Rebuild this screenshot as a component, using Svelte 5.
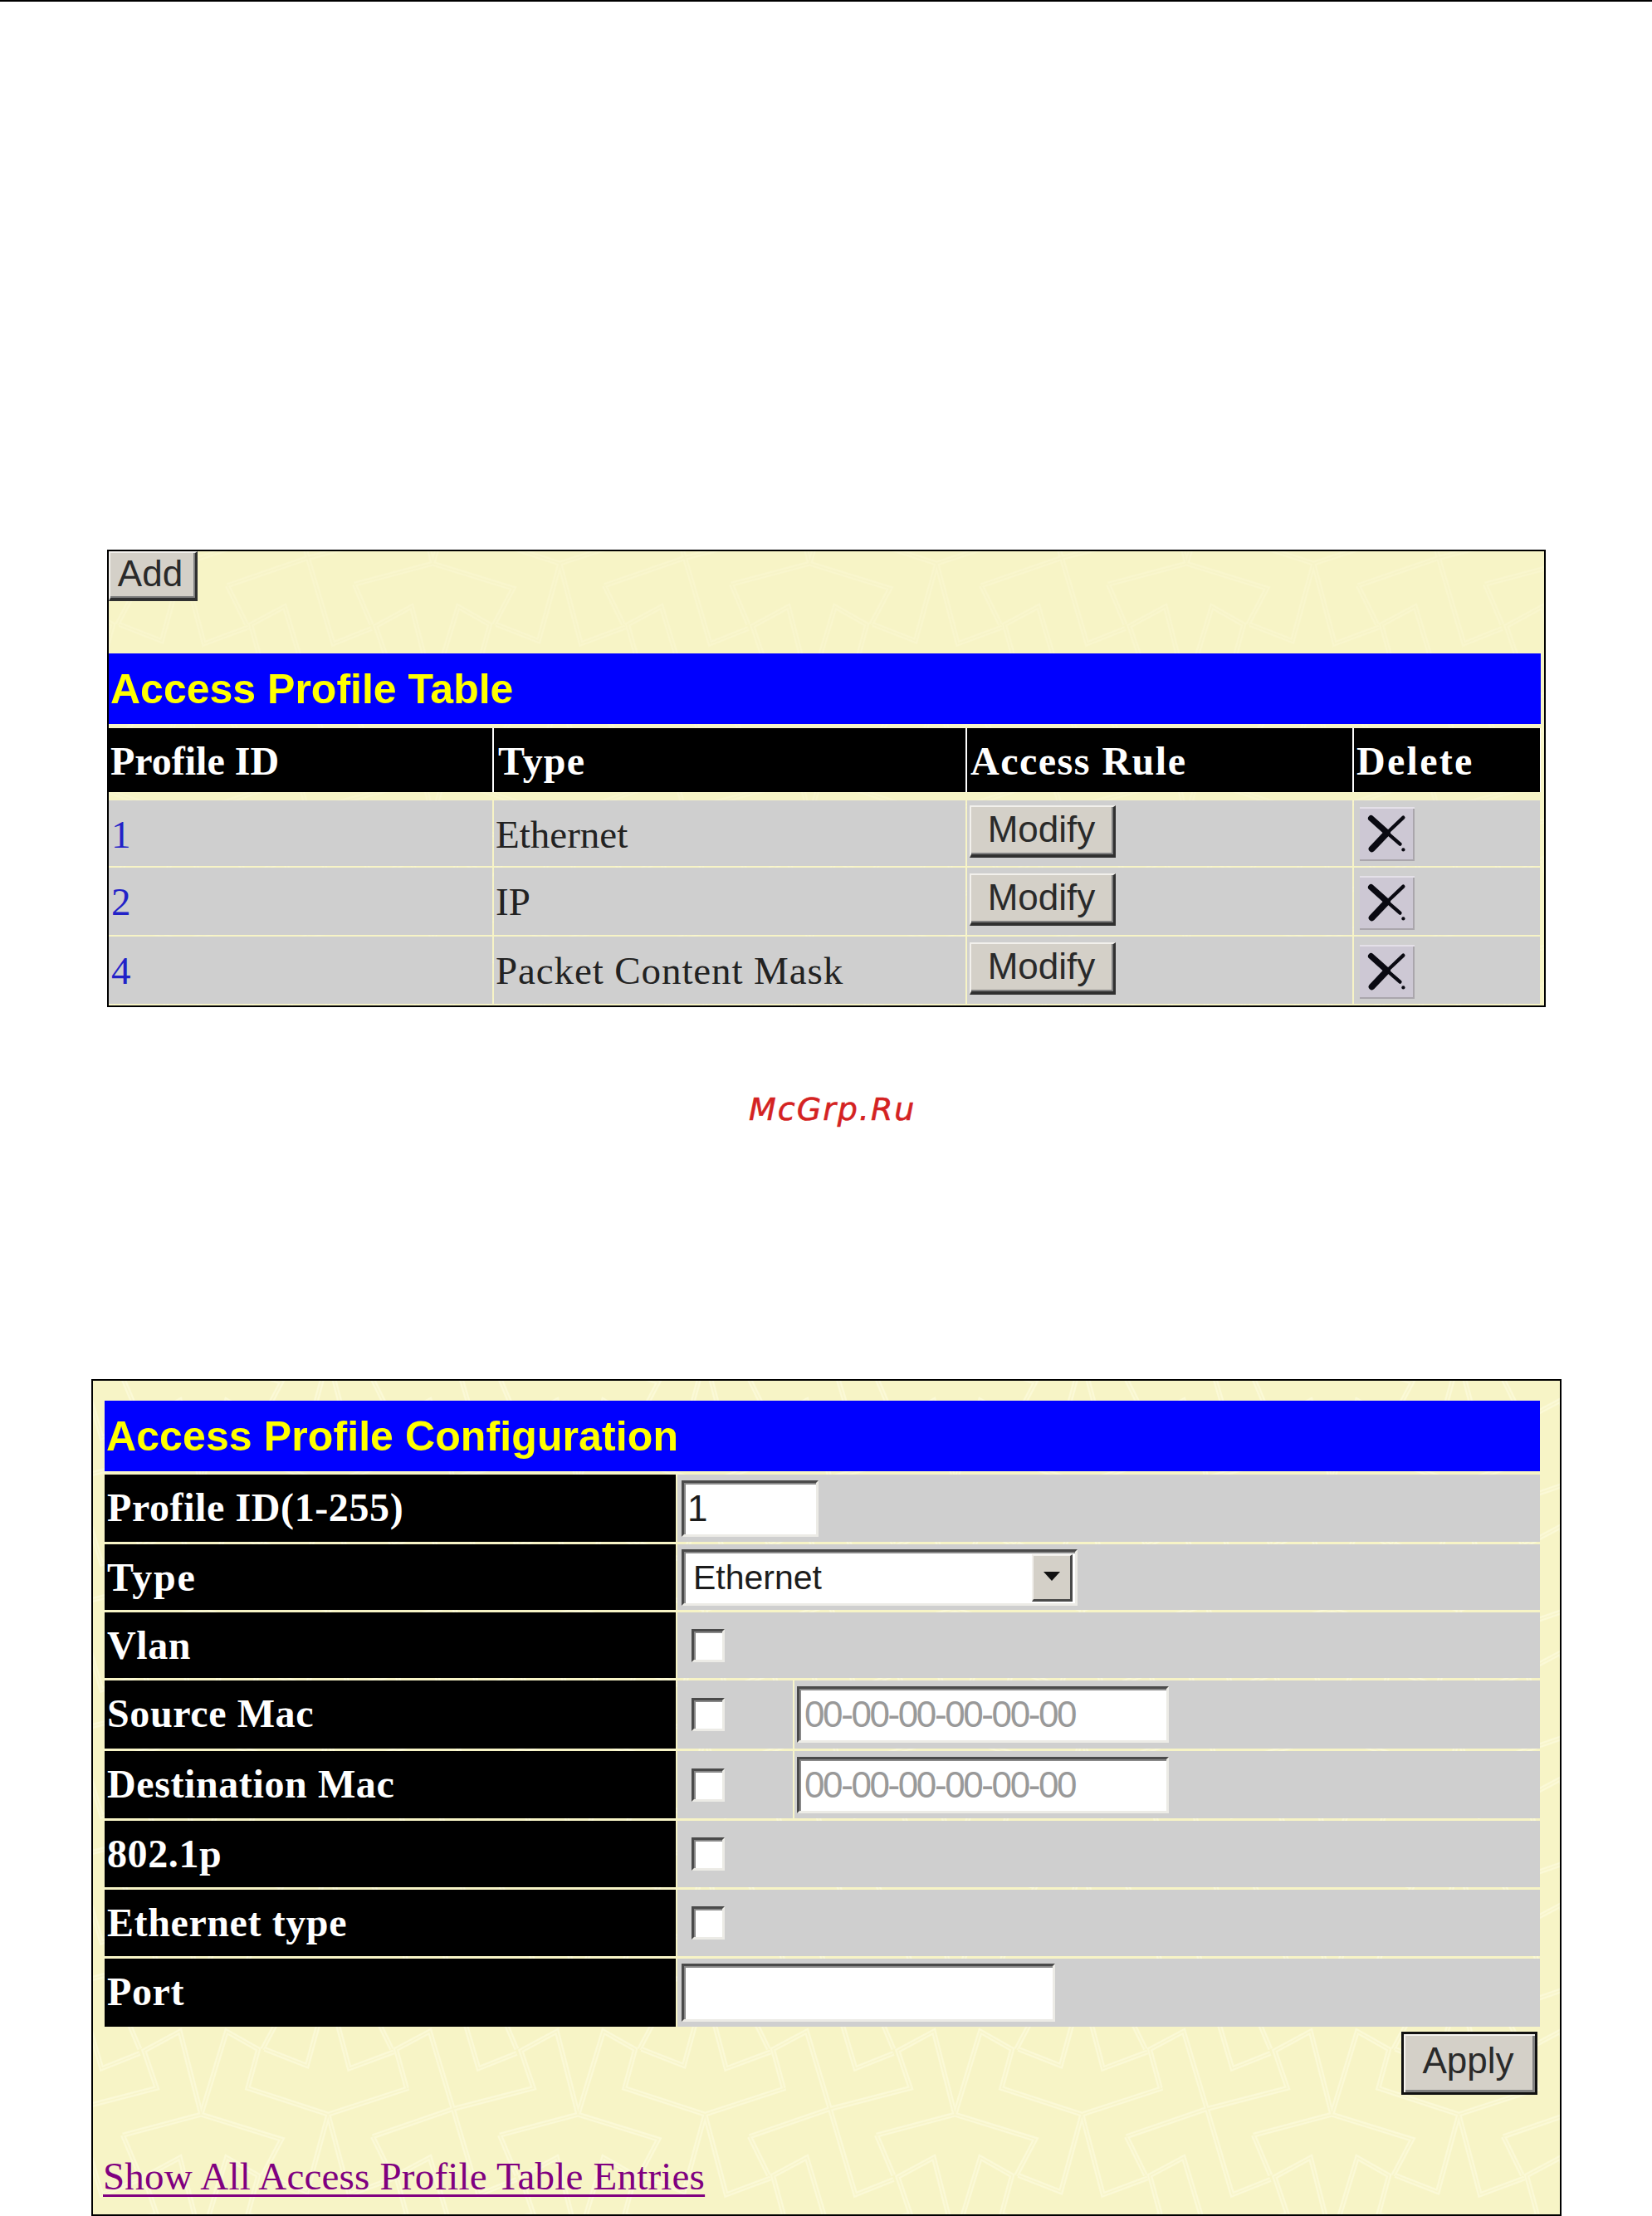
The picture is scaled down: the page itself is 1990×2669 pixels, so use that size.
<script lang="ts">
  const profiles = [
    { id: "1", type: "Ethernet", wide: false },
    { id: "2", type: "IP", wide: false },
    { id: "4", type: "Packet Content Mask", wide: true },
  ];

  // wallpaper strokes for one tile, 454 x 152
  const strokes = [
    [[45,400],[235,300],[425,225],[395,90],[480,20],[530,320]],
    [[125,225],[100,85],[180,20],[235,300],[295,610],[385,555]],
    [[530,320],[590,20],[665,85],[640,225],[830,320],[1020,225]],
    [[345,395],[530,320],[720,410],[675,540]],
    [[830,320],[780,600],[680,540]],
    [[830,320],[880,610],[985,550]],
    [[45,400],[90,540]],
    [[345,395],[385,540]],
  ].map((line) => line.map(([x, y]) => `${x * 0.51},${y / 3}`).join(" "));

  const offsets = [-454, 0, 454].flatMap((x) => [-152, 0, 152].map((y) => `translate(${x},${y})`));
</script>

{#snippet wallpaper(id: string, tx: number, ty: number)}
  <svg class="wallpaper" aria-hidden="true">
    <defs>
      <pattern {id} width="454" height="152" patternUnits="userSpaceOnUse" patternTransform="translate({tx},{ty})">
        {#each offsets as offset}
          <g transform={offset}>
            {#each strokes as points}
              <polyline {points} class="line-outer" />
            {/each}
            {#each strokes as points}
              <polyline {points} class="line-inner" />
            {/each}
          </g>
        {/each}
      </pattern>
    </defs>
    <rect width="100%" height="100%" fill="url(#{id})" />
  </svg>
{/snippet}

<div class="page">
  <div class="top-rule"></div>

  <section class="panel table-panel">
    {@render wallpaper("tile-a", 120, 60)}
    <button class="btn add">Add</button>
    <h2 class="title">Access Profile Table</h2>
    <div class="row head">
      <div>Profile ID</div>
      <div>Type</div>
      <div>Access Rule</div>
      <div>Delete</div>
    </div>
    {#each profiles as p, i}
      <div class="row item" class:first={i === 0}>
        <div class="id-cell"><a href="#top">{p.id}</a></div>
        <div class="type-cell" class:wide={p.wide}>{p.type}</div>
        <div class="rule-cell"><button class="btn modify" class:top={i === 0}>Modify</button></div>
        <div class="del-cell">
          <button class="del" class:top={i === 0} aria-label="Delete">
            <svg viewBox="0 0 68 67" width="66" height="65">
              <line x1="14" y1="14" x2="34" y2="32" stroke-width="7.5" />
              <line x1="34" y1="32" x2="50" y2="46" stroke-width="4.4" />
              <line x1="15" y1="52" x2="34" y2="32" stroke-width="8" />
              <line x1="34" y1="32" x2="54" y2="13" stroke-width="4.4" />
              <circle cx="54" cy="53" r="2.2" />
            </svg>
          </button>
        </div>
      </div>
    {/each}
  </section>

  <div class="watermark">McGrp.Ru</div>

  <section class="panel form-panel">
    {@render wallpaper("tile-b", 314, 17)}
    <h2 class="title">Access Profile Configuration</h2>
    <div class="form">
      <div class="label">Profile ID(1-255)</div>
      <div class="value"><input class="field id-field" value="1" /></div>

      <div class="label type-label">Type</div>
      <div class="value">
        <div class="select-wrap">
          <select class="field select">
            <option>Ethernet</option>
          </select>
          <span class="arrow"></span>
        </div>
      </div>

      <div class="label">Vlan</div>
      <div class="value"><input type="checkbox" class="check" /></div>

      <div class="label">Source Mac</div>
      <div class="value split">
        <div class="check-cell"><input type="checkbox" class="check" /></div>
        <div class="mac-cell"><input class="field mac" placeholder="00-00-00-00-00-00" /></div>
      </div>

      <div class="label">Destination Mac</div>
      <div class="value split">
        <div class="check-cell"><input type="checkbox" class="check" /></div>
        <div class="mac-cell"><input class="field mac" placeholder="00-00-00-00-00-00" /></div>
      </div>

      <div class="label">802.1p</div>
      <div class="value"><input type="checkbox" class="check" /></div>

      <div class="label">Ethernet type</div>
      <div class="value"><input type="checkbox" class="check" /></div>

      <div class="label">Port</div>
      <div class="value"><input class="field port" /></div>
    </div>
    <div class="actions"><button class="btn apply">Apply</button></div>
    <a class="show-all" href="#top">Show All Access Profile Table Entries</a>
  </section>
</div>

<style>
  :global(body) {
    margin: 0;
    background: #fff;
  }

  .page {
    width: 1990px;
    height: 2669px;
    overflow: hidden;
    font-family: "Liberation Serif", serif;
    font-size: 47px;
    color: #222;
  }

  .top-rule {
    height: 2px;
    background: #000;
  }

  .panel {
    position: relative;
    box-sizing: border-box;
    border: 2px solid #000;
    background: #f7f4c6;
  }

  .wallpaper {
    position: absolute;
    inset: 0;
    width: 100%;
    height: 100%;
  }

  .line-outer {
    fill: none;
    stroke: #fbf9d6;
    stroke-width: 6;
  }

  .line-inner {
    fill: none;
    stroke: #f8f5cb;
    stroke-width: 1.5;
  }

  .table-panel .line-outer {
    stroke: #f9f6cd;
  }

  .table-panel .line-inner {
    stroke: #f7f4c8;
  }

  .panel > :global(*:not(svg)) {
    position: relative;
  }

  .table-panel {
    width: 1733px;
    height: 551px;
    margin: 660px 0 0 129px;
    padding: 0 4px 0 0;
  }

  .title {
    margin: 0;
    height: 85px;
    padding: 8px 0 0 2px;
    box-sizing: border-box;
    background: #0000ff;
    color: #ffff00;
    font: bold 50px/70px "Liberation Sans", Arial, sans-serif;
    white-space: nowrap;
  }

  .form-panel .title {
    letter-spacing: 0.1px;
  }

  .table-panel .title {
    margin-top: 63px;
  }

  .btn {
    display: block;
    box-sizing: border-box;
    padding: 0;
    background: #d4d0c8;
    border-style: solid;
    border-width: 2px 3px 4px 2px;
    border-color: #f2f0ec #303030 #303030 #f2f0ec;
    box-shadow: inset -2px -2px 0 #808080;
    color: #2a2a2a;
    font: 44px "Liberation Sans", Arial, sans-serif;
  }

  .add {
    width: 107px;
    height: 60px;
    padding: 0 6px 6px 0;
  }

  .row {
    display: grid;
    grid-template-columns: 462px 568px 464px 224px;
    column-gap: 2px;
  }

  .head {
    height: 77px;
    margin-top: 5px;
    margin-bottom: 10px;
    background: #fff;
    color: #fff;
    font-weight: bold;
    font-size: 48px;
  }

  .head > div {
    background: #000;
    line-height: 72px;
    padding: 4px 0 0 2px;
  }

  .head > div:nth-child(2) {
    padding-left: 5px;
    letter-spacing: 1.2px;
  }

  .head > div:nth-child(3) {
    padding-left: 4px;
    letter-spacing: 1.5px;
  }

  .head > div:nth-child(4) {
    padding-left: 3px;
    letter-spacing: 2.3px;
  }

  .item {
    height: 81px;
    margin-bottom: 2px;
  }

  .item.first {
    height: 79px;
  }

  .item > div {
    background: #cfcfcf;
  }

  .id-cell,
  .type-cell {
    line-height: 72px;
    padding: 5px 0 0 3px;
  }

  .type-cell {
    padding-left: 2px;
  }

  .type-cell.wide {
    letter-spacing: 0.9px;
  }

  .id-cell a {
    color: #2222c8;
    text-decoration: none;
  }

  .modify {
    width: 176px;
    height: 63px;
    margin: 7px 0 0 3px;
    padding: 0 2px 4px 0;
  }

  .modify.top {
    margin-top: 6px;
  }

  .del {
    display: block;
    box-sizing: border-box;
    width: 66px;
    height: 65px;
    margin: 10px 0 0 7px;
    padding: 0;
    border: none;
    background: #cdc8d4;
    box-shadow: inset 0 2px 0 #e4e0e8, inset -2px -2px 0 #aaa6ac;
  }

  .del.top {
    margin-top: 8px;
  }

  .del svg {
    display: block;
  }

  .del line {
    stroke: #0a0a12;
    stroke-linecap: round;
  }

  .del circle {
    fill: #0a0a12;
  }

  .watermark {
    height: 46px;
    margin: 100px 0 0 902px;
    color: #d42222;
    font: italic 38px/46px "DejaVu Sans", sans-serif;
    letter-spacing: 2px;
    -webkit-text-stroke: 0.6px #d42222;
  }

  .form-panel {
    width: 1771px;
    height: 1008px;
    margin: 302px 0 0 110px;
    padding: 24px 24px 0 14px;
  }

  .form {
    display: grid;
    grid-template-columns: 688px 1fr;
    grid-template-rows: 81px 79px 79px 82px 81px 80px 80px 82px;
    gap: 3px 2px;
    margin-top: 4px;
  }

  .label {
    padding: 2px 0 0 3px;
    background: #000;
    color: #fff;
    font-weight: bold;
    font-size: 48px;
    line-height: 76px;
    letter-spacing: 0.6px;
    white-space: nowrap;
  }

  .type-label {
    letter-spacing: 1.8px;
  }

  .value {
    display: flex;
    align-items: center;
    padding-left: 5px;
    background: #cfcfcf;
  }

  .value.split {
    display: grid;
    grid-template-columns: 139px 1fr;
    align-items: stretch;
    column-gap: 2px;
    padding: 0;
    background: #f8f5cb;
  }

  .check-cell,
  .mac-cell {
    display: flex;
    align-items: center;
    background: #cfcfcf;
  }

  .check-cell {
    padding-left: 17px;
  }

  .mac-cell {
    padding-left: 3px;
  }

  .field {
    box-sizing: border-box;
    height: 68px;
    margin: 0;
    padding: 0 0 0 4px;
    border-style: solid;
    border-width: 3px;
    border-color: #4a4a4a #ecebe6 #ecebe6 #4a4a4a;
    box-shadow: inset 2px 2px 0 #888;
    border-radius: 0;
    outline: none;
    background: #fff;
    color: #1c1c1c;
    font: 44px "Liberation Sans", Arial, sans-serif;
    appearance: none;
  }

  .id-field {
    width: 165px;
  }

  .select-wrap {
    position: relative;
  }

  .select {
    display: block;
    width: 477px;
    padding-left: 11px;
    font-size: 41px;
  }

  .arrow {
    position: absolute;
    top: 6px;
    right: 6px;
    width: 49px;
    height: 57px;
    box-sizing: border-box;
    background: #d4d0c8;
    border-style: solid;
    border-width: 2px 3px 3px 2px;
    border-color: #f2f0ec #4a4a4a #4a4a4a #f2f0ec;
  }

  .arrow::after {
    content: "";
    position: absolute;
    left: 12px;
    top: 19px;
    border-style: solid;
    border-width: 11px 10px 0;
    border-color: #111 transparent transparent;
  }

  .check {
    box-sizing: border-box;
    width: 40px;
    height: 40px;
    margin: 0 0 0 12px;
    border-style: solid;
    border-width: 3px;
    border-color: #4a4a4a #ecebe6 #ecebe6 #4a4a4a;
    box-shadow: inset 2px 2px 0 #888;
    background: #fff;
    appearance: none;
  }

  .check-cell .check {
    margin-left: 0;
  }

  .mac {
    width: 448px;
    padding-left: 6px;
    letter-spacing: -2.4px;
  }

  .mac::placeholder {
    color: #999;
    opacity: 1;
  }

  .port {
    width: 450px;
    height: 70px;
  }

  .actions {
    display: flex;
    justify-content: flex-end;
    padding: 6px 3px 0 0;
  }

  .apply {
    width: 164px;
    height: 76px;
    border: 3px solid #111;
    box-shadow: inset 2px 2px 0 #f4f2ee, inset -3px -3px 0 #808080;
    padding: 0 3px 6px 0;
  }

  .show-all {
    display: block;
    width: max-content;
    margin: 73px 0 0 -2px;
    color: #800080;
    line-height: 50px;
    letter-spacing: 0.2px;
    text-decoration: underline;
    text-decoration-thickness: 3px;
    text-underline-offset: 6px;
    white-space: nowrap;
  }
</style>
